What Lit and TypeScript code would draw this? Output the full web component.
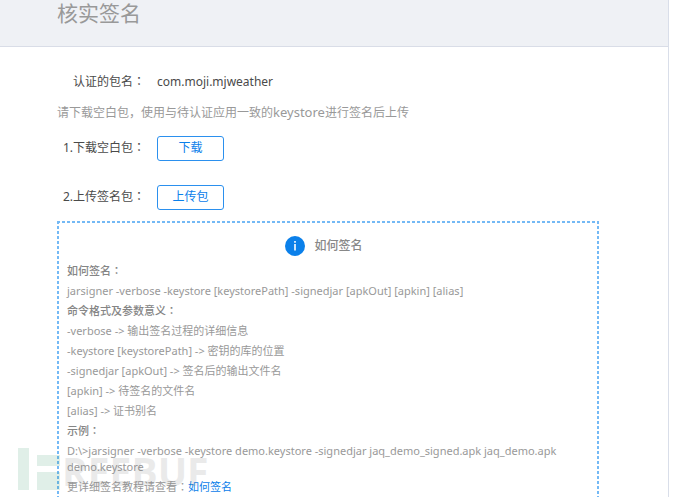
import { LitElement, html, css } from "lit";
import { customElement } from "lit/decorators.js";

const colon = html`<span class="mid" lang="zh-TW">：</span>`;

@customElement("app-root")
class AppRoot extends LitElement {
  static styles = css`
    :host { display: block; height: 100vh; overflow: hidden; position: relative; background: #fff; color: #4a4a4a; font: 12px/20px "Noto Sans", "Noto Sans CJK SC", sans-serif; }
    * { box-sizing: border-box; }
    .page { margin-right: 21px; min-height: 100%; border-right: 1px solid #d9dee9; }
    header { height: 47px; padding-left: 57px; background: #eff1f5; border-bottom: 1px solid #d9dde7; }
    h1 { margin: 0; font: 400 21px/25px "Noto Sans CJK SC", sans-serif; color: #999; }
    main { padding: 23px 69px 0 57px; }
    .row { display: flex; align-items: center; gap: 12px; height: 24px; }
    .row + .row { margin-top: 25px; }
    .label { width: 88px; text-align: right; white-space: nowrap; }
    .latin { font-size: 13px; }
    .mid { font-family: "Noto Sans CJK TC", sans-serif; line-height: 1; }
    .note { margin: 8px 0 13px; color: #999; }
    button { width: 67px; height: 25px; padding: 0; border: 1px solid #2b90ee; border-radius: 3px; background: #fff; color: #0b80ea; font: inherit; }
    .tip {
      --h: repeating-linear-gradient(90deg, #74b9f5 0 3px, transparent 3px 5px);
      --v: repeating-linear-gradient(#74b9f5 0 3px, transparent 3px 5px);
      margin-top: 12px; padding: 14px 18px 22px 10px; color: #999; font-size: 11px; line-height: 20px;
      background: var(--h) 0 0 / 100% 2px no-repeat, var(--h) 0 100% / 100% 2px no-repeat, var(--v) 0 0 / 2px 100% no-repeat, var(--v) 100% 0 / 2px 100% no-repeat;
    }
    .tip h2 { display: flex; align-items: center; justify-content: center; gap: 9px; height: 22px; margin: 0 0 4px; font-size: 12px; font-weight: 500; color: #888; }
    .tip p { margin: 0; }
    .tip .head { font-weight: 500; color: #858585; }
    .tip .example { line-height: 16px; padding: 2px 0; }
    a { color: #0b80ea; text-decoration: none; }
    .mark { position: absolute; left: 18px; top: 448px; display: flex; gap: 2px; color: #777; opacity: .15; pointer-events: none; }
    .mark span { font: 700 39px/46px "Open Sans", sans-serif; }
  `;
  render() {
    return html`
      <div class="page">
        <header><h1>核实签名</h1></header>
        <main>
          <div class="row"><span class="label">认证的包名${colon}</span><span>com.moji.mjweather</span></div>
          <p class="note">请下载空白包，使用与待认证应用一致的<span class="latin">keystore</span>进行签名后上传</p>
          <div class="row"><label class="label" for="download">1.下载空白包${colon}</label><button id="download">下载</button></div>
          <div class="row"><label class="label" for="upload">2.上传签名包${colon}</label><button id="upload">上传包</button></div>
          <section class="tip">
            <h2><svg width="20" height="20" viewBox="0 0 20 20" aria-hidden="true"><circle cx="10" cy="10" r="10" fill="#0b80ea"/><path d="M9.2 5h1.6v1.7H9.2zM9.2 8h1.6v6.5H9.2z" fill="#fff"/></svg>如何签名</h2>
            <p class="head">如何签名${colon}</p>
            <p>jarsigner -verbose -keystore [keystorePath] -signedjar [apkOut] [apkin] [alias]</p>
            <p class="head">命令格式及参数意义${colon}</p>
            <p>-verbose -&gt; 输出签名过程的详细信息</p>
            <p>-keystore [keystorePath] -&gt; 密钥的库的位置</p>
            <p>-signedjar [apkOut] -&gt; 签名后的输出文件名</p>
            <p>[apkin] -&gt; 待签名的文件名</p>
            <p>[alias] -&gt; 证书别名</p>
            <p class="head">示例${colon}</p>
            <p class="example">D:\\&gt;jarsigner -verbose -keystore demo.keystore -signedjar jaq_demo_signed.apk jaq_demo.apk demo.keystore</p>
            <p>更详细签名教程请查看${colon}<a href="#sign">如何签名</a></p>
          </section>
        </main>
      </div>
      <div class="mark"><svg width="42" height="42" viewBox="0 0 42 42" aria-hidden="true"><path d="M0 0h11v42H0zM19 7h23v11H19zM19 24h23v18H19z" fill="#349b6d"/></svg><span>REEBUF</span></div>
    `;
  }
}
